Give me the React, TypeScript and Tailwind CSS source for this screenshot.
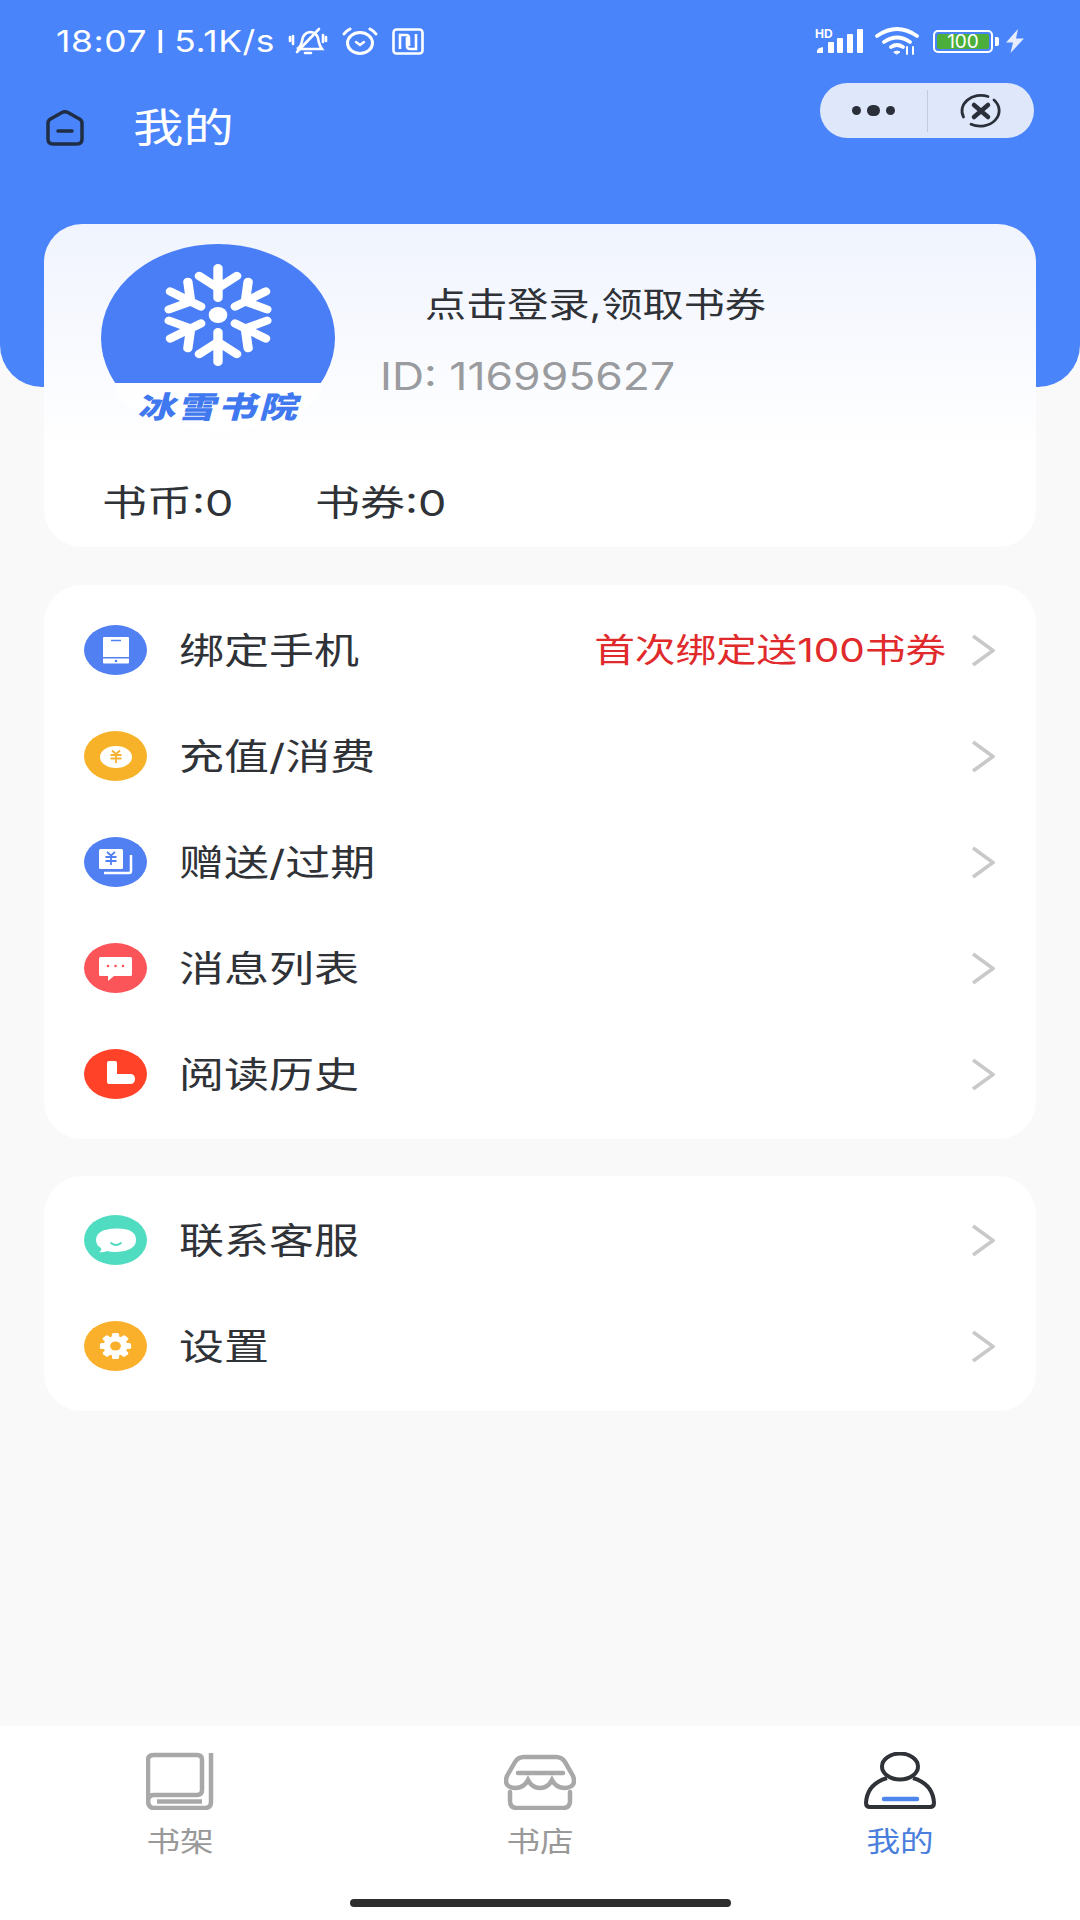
import type { ReactNode } from 'react'

const cjk = 'font-[Inter,"Noto_Sans_CJK_SC",sans-serif]'

function HomeIcon() {
  return (
    <svg width="40" height="36" viewBox="0 0 40 36" fill="none" stroke="#1f2d45" strokeWidth="3.5">
      <path d="M3 13q0-2.500 2.500-4L17 2.500q3-1.500 6 0L34.500 9q2.500 1.500 2.500 4v16q0 5-5 5H8q-5 0-5-5z" />
      <path d="M13 21h14" strokeLinecap="round" />
    </svg>
  )
}

function BellOff() {
  return (
    <svg width="40" height="28" viewBox="0 0 40 28" fill="none" stroke="#fff" strokeWidth="2.6" strokeLinecap="round">
      <path d="M9 22q4-2 5-8q1-8 8-9q6 0 8 6q1 7 4 11z" />
      <path d="M17 26h6M9 25L31 2" />
      <path d="M2 10v4M5 9v8M35 8v7M38 10v4" />
    </svg>
  )
}

function AlarmIcon() {
  return (
    <svg width="36" height="28" viewBox="0 0 36 28" fill="none" stroke="#fff" strokeWidth="3" strokeLinecap="round">
      <ellipse cx="18" cy="16" rx="12.500" ry="10.500" />
      <path d="M2 7q2-3 6-5M34 7q-2-3-6-5" />
      <path d="M14 15l4 3 4-3" strokeWidth="2.400" />
    </svg>
  )
}

function NfcIcon() {
  return (
    <svg width="32" height="27" viewBox="0 0 32 27" fill="none" stroke="#fff" strokeWidth="2.600">
      <rect x="1.500" y="1.500" width="29" height="24" rx="3" />
      <path d="M8 21V7h6q3 0 3 3v8M24 6v15h-6q-3 0-3-3V9" />
    </svg>
  )
}

function SignalIcon() {
  return (
    <svg width="48" height="26" viewBox="0 0 48 26" className="overflow-visible">
      <text x="0" y="10" fontSize="12" fontWeight="700" fill="#fff" fontFamily="Inter, sans-serif">HD</text>
      <g fill="#fff">
        <path d="M2 25v-2q0-3 6-4v6z" />
        <rect x="13" y="14" width="6" height="11" rx="1" />
        <rect x="22" y="10" width="6" height="15" rx="1" />
        <rect x="32" y="6" width="6" height="19" rx="1" />
        <rect x="42" y="1" width="6" height="24" rx="1" />
      </g>
    </svg>
  )
}

function WifiIcon() {
  return (
    <svg width="46" height="28" viewBox="0 0 46 28" fill="none" stroke="#fff" strokeWidth="3.800" strokeLinecap="round">
      <path d="M2 9q20-14 40 0M9 15q13-9 26 0M16 20q6-4 12 0" />
      <path d="M19 25q3-2 6 0l-3 2z" fill="#fff" strokeWidth="1" />
      <path d="M32 20v7M38 20v7" strokeWidth="2" />
    </svg>
  )
}

function BatteryIcon() {
  return (
    <div className="flex items-center gap-[2px]">
      <div className="flex h-[23px] w-[60px] items-center rounded-[5px] border-[2px] border-white p-[2px]">
        <div className="flex h-full w-full items-center justify-center rounded-[2px] bg-[#4caf3c] font-['Inter',sans-serif] text-[19px] leading-none text-white">
          100
        </div>
      </div>
      <div className="h-[9px] w-[4px] rounded-r-[2px] bg-white" />
    </div>
  )
}

function BoltIcon() {
  return (
    <svg width="18" height="24" viewBox="0 0 18 24" fill="#fff" opacity="0.85" className="-ml-[5px]">
      <path d="M12 0L0 13.500h7L4.500 24 18 9.500h-8z" />
    </svg>
  )
}

function CloseIcon() {
  return (
    <svg width="44" height="36" viewBox="0 0 44 36" fill="none" stroke="#2a2f3a" strokeLinecap="round">
      <path d="M4.500 24A19 15.500 0 0 1 29 3.500" strokeWidth="2.800" />
      <path d="M35 7A19 15.500 0 0 1 12 31.200" strokeWidth="2.800" />
      <path d="M15 12l14 12M29 12L15 24" strokeWidth="4.500" />
    </svg>
  )
}

function Snowflake() {
  const arm = 'M0-17V-47M0-27L-16-39M0-27L16-39'
  return (
    <g transform="translate(117 71) scale(1.17 1)" stroke="#fff" strokeLinecap="round" fill="none">
      <ellipse cx="0" cy="0" rx="8" ry="8" fill="#fff" stroke="none" />
      {[0, 60, 120, 180, 240, 300].map((a) => (
        <g key={a} transform={`rotate(${a})`}>
          <path d={arm} strokeWidth="8" />
        </g>
      ))}
    </g>
  )
}

function Logo() {
  return (
    <div className="flex w-[234px] flex-col items-center">
      <svg width="234" height="139" viewBox="0 0 234 139">
        <ellipse cx="117" cy="94" rx="117" ry="94" fill="#4a7ef7" />
        <Snowflake />
      </svg>
      <div className="flex h-[47px] w-[207px] justify-center bg-white/70 pt-[9px] [border-radius:0_0_50%_50%/0_0_100%_100%]">
        <p className="ml-[3px] scale-x-[1.27] -skew-x-12 text-[30px] leading-[30px] font-black tracking-[2px] whitespace-nowrap text-[#3f78ef]">
          冰雪书院
        </p>
      </div>
    </div>
  )
}

function TabletGlyph() {
  return (
    <svg width="63" height="50" viewBox="0 0 63 50">
      <ellipse cx="31.500" cy="25" rx="31.500" ry="25" fill="#5180f3" />
      <path d="M19 13q0-1 1-1h24q1 0 1 1v19H19zM19 33.500h26v4q0 1-1 1H20q-1 0-1-1z" fill="#fff" />
      <path d="M27 15.500h10" stroke="#5180f3" strokeWidth="1.500" />
      <circle cx="32" cy="36" r="1.300" fill="#5180f3" />
    </svg>
  )
}

function CoinGlyph() {
  return (
    <svg width="63" height="50" viewBox="0 0 63 50">
      <ellipse cx="31.500" cy="25" rx="31.500" ry="25" fill="#f8b22a" />
      <ellipse cx="32" cy="26" rx="16" ry="11" fill="#fff" />
      <path d="M28 19.500l4 3.500 4-3.500M26.500 24h11M26.500 27.500h11M32 23v9" stroke="#f5b132" strokeWidth="1.800" fill="none" />
    </svg>
  )
}

function GiftGlyph() {
  return (
    <svg width="63" height="50" viewBox="0 0 63 50">
      <ellipse cx="31.500" cy="25" rx="31.500" ry="25" fill="#5180f3" />
      <path d="M20 36h25q2 0 2-2V18" fill="none" stroke="#fff" strokeWidth="2.500" />
      <rect x="15" y="12" width="24" height="20" rx="1.500" fill="#fff" />
      <path d="M23 15l4 3.500 4-3.500M21.500 20h11M21.500 24h11M27 19v9" stroke="#5180f3" strokeWidth="1.800" fill="none" />
    </svg>
  )
}

function MessageGlyph() {
  return (
    <svg width="63" height="50" viewBox="0 0 63 50">
      <ellipse cx="31.500" cy="25" rx="31.500" ry="25" fill="#fb5459" />
      <path d="M15 15.500q0-1.500 1.500-1.500h30q1.500 0 1.500 1.500v16q0 1.500-1.500 1.500H30l-6 5v-5h-7.500q-1.500 0-1.500-1.500z" fill="#fff" />
      <g fill="#fb5459">
        <circle cx="24" cy="23" r="1.300" />
        <circle cx="31.500" cy="23" r="1.300" />
        <circle cx="39" cy="23" r="1.300" />
      </g>
    </svg>
  )
}

function HistoryGlyph() {
  return (
    <svg width="63" height="50" viewBox="0 0 63 50">
      <ellipse cx="31.500" cy="25" rx="31.500" ry="25" fill="#ff4228" />
      <path d="M23 14q0-2 2-2h6q2 0 2 2v11h13q5 0 5 5t-5 5H25q-2 0-2-2z" fill="#fff" />
    </svg>
  )
}

function ServiceGlyph() {
  return (
    <svg width="63" height="50" viewBox="0 0 63 50">
      <ellipse cx="31.500" cy="25" rx="31.500" ry="25" fill="#4fdcc1" />
      <path d="M12 25q0-11 20-11.500Q52 13 52 25q0 11-20 12q-6 0-9-1-4 2-8 1 3-1 2-4-5-3-5-8z" fill="#fff" />
      <path d="M27 28q5 4 10 0" stroke="#4fdcc1" strokeWidth="1.800" fill="none" strokeLinecap="round" />
    </svg>
  )
}

function SettingsGlyph() {
  return (
    <svg width="63" height="50" viewBox="0 0 63 50">
      <ellipse cx="31.500" cy="25" rx="31.500" ry="25" fill="#fbb02c" />
      <g transform="translate(31.500 25) scale(1.200 1)">
        {[0, 45, 90, 135].map((a) => (
          <rect key={a} x="-3" y="-13" width="6" height="26" rx="1.500" fill="#fff" transform={`rotate(${a})`} />
        ))}
        <circle r="10" fill="#fff" />
        <circle r="4.500" fill="#fbb02c" />
      </g>
    </svg>
  )
}

function Chevron() {
  return (
    <svg width="24" height="33" viewBox="0 0 24 33" fill="none" stroke="#c9c9c9" strokeWidth="3.600" className="shrink-0">
      <path d="M2 2l20 14.500L2 31" />
    </svg>
  )
}

function Row({ icon, label, note }: { icon: ReactNode; label: string; note?: string }) {
  return (
    <div className="flex h-[106px] items-center pr-[41px] pl-[40px]">
      {icon}
      <span className="ml-[32px] origin-left scale-x-[1.25] pt-[1px] text-[36px] leading-none text-[#2f3237]">{label}</span>
      {note && (
        <span className="mr-[25px] ml-auto origin-right scale-x-[1.23] pt-[1px] text-[33px] leading-none text-[#e02a2c]">{note}</span>
      )}
      <span className={note ? '' : 'ml-auto'}>
        <Chevron />
      </span>
    </div>
  )
}

function BookTab() {
  return (
    <svg width="68" height="58" viewBox="0 0 68 58" fill="none" stroke="#a8a8a8" strokeWidth="4.500">
      <path d="M8 3h43q5 0 5 5v30q0 5-5 5H8q-6 0-6 6V8q0-5 6-5z" />
      <path d="M65 1v49q0 6-6 6H8q-6 0-6-8" />
      <path d="M11 49.500h45" />
    </svg>
  )
}

function StoreTab() {
  return (
    <svg width="72" height="56" viewBox="0 0 72 56" fill="none" stroke="#a8a8a8" strokeWidth="4.500" strokeLinecap="round">
      <path d="M20 3H52Q58 3 61 8L69 22Q73 33 61 34Q52 34 48 26Q44 34 36 34Q28 34 24 26Q20 34 11 34Q-1 33 3 22L11 8Q14 3 20 3z" />
      <path d="M14 19h45" />
      <path d="M6 38v9q0 7 7 7h46q7 0 7-7v-9" />
    </svg>
  )
}

function MeTab() {
  return (
    <svg width="74" height="58" viewBox="0 0 74 58" fill="none" strokeWidth="4">
      <ellipse cx="37" cy="14.500" rx="18" ry="13" stroke="#2f3237" />
      <path d="M24 26Q4 32 3 51q0 4 4 4h60q4 0 4-4-1-19-21-25" stroke="#2f3237" />
      <path d="M21 47h33" stroke="#4f86ee" strokeWidth="4.500" strokeLinecap="round" />
    </svg>
  )
}

function Tab({ icon, label, active }: { icon: ReactNode; label: string; active?: boolean }) {
  return (
    <div className="flex flex-col items-center">
      <div className="flex h-[58px] items-end">{icon}</div>
      <span className={`mt-[18px] scale-x-[1.2] text-[28px] leading-[28px] ${active ? 'text-[#4a7fdc]' : 'text-[#999999]'}`}>{label}</span>
    </div>
  )
}

export default function App() {
  return (
    <div className={`${cjk} flex h-[1920px] w-[1080px] flex-col overflow-hidden bg-[#f9f9f9]`}>
      {/* Blue header, the profile card overlaps its bottom */}
      <header className="h-[387px] shrink-0 rounded-b-[42px] bg-[#4a84fb] pt-[27px]">
        <div className="flex h-[28px] items-center justify-between pr-[56px] pl-[56px]">
          <div className="flex items-center text-white">
            <span className="flex w-[232px] origin-left scale-x-[1.18] items-center text-[30px] leading-none tracking-[0.5px] whitespace-nowrap">
              18:07<span className="mx-[10px] h-[23px] w-[3px] bg-white" />5.1K/s
            </span>
            <span className="flex items-center gap-[14px]">
              <BellOff />
              <AlarmIcon />
              <NfcIcon />
            </span>
          </div>
          <div className="flex items-center gap-[12px]">
            <SignalIcon />
            <WifiIcon />
            <BatteryIcon />
            <BoltIcon />
          </div>
        </div>
        <div className="flex items-start justify-between pt-[28px] pr-[46px] pl-[45px]">
          <div className="mt-[25px] flex h-[40px] items-center">
            <HomeIcon />
            <span className="ml-[48px] origin-left scale-x-[1.26] text-[40px] leading-none text-white">我的</span>
          </div>
          <div className="flex h-[55px] w-[214px] items-center rounded-full bg-[#dfe8fb]">
            <div className="flex w-[107px] items-center justify-center gap-[6px]">
              <span className="size-[9px] rounded-full bg-[#2a2f3a]" />
              <span className="h-[11px] w-[13px] rounded-full bg-[#2a2f3a]" />
              <span className="size-[9px] rounded-full bg-[#2a2f3a]" />
            </div>
            <div className="h-[42px] w-px bg-[#c4ccdc]" />
            <div className="flex flex-1 items-center justify-center">
              <CloseIcon />
            </div>
          </div>
        </div>
      </header>

      {/* Profile card */}
      <section className="relative mx-[44px] -mt-[163px] h-[323px] shrink-0 rounded-[38px] bg-linear-to-b from-[#f0f4fe] from-0% to-white to-70% pt-[20px]">
        <div className="flex pl-[57px]">
          <Logo />
          <div className="ml-[45px] flex flex-col">
            <span className="mt-[44px] ml-[45px] origin-left scale-x-[1.21] text-[34px] leading-none whitespace-nowrap text-[#2f3237]">点击登录,领取书券</span>
            <span className="mt-[35px] origin-left scale-x-[1.17] text-[38px] leading-none whitespace-nowrap text-[#999b9e]">ID: 116995627</span>
          </div>
        </div>
        <div className="mt-[55px] flex gap-[85px] pl-[58px] text-[36px] leading-none text-[#2f3237]">
          <span className="w-[128px] origin-left scale-x-[1.25] whitespace-nowrap">书币:0</span>
          <span className="w-[128px] origin-left scale-x-[1.25] whitespace-nowrap">书券:0</span>
        </div>
      </section>

      {/* Menu groups */}
      <section className="mx-[44px] mt-[38px] shrink-0 rounded-[38px] bg-white py-[12px]">
        <Row icon={<TabletGlyph />} label="绑定手机" note="首次绑定送100书券" />
        <Row icon={<CoinGlyph />} label="充值/消费" />
        <Row icon={<GiftGlyph />} label="赠送/过期" />
        <Row icon={<MessageGlyph />} label="消息列表" />
        <Row icon={<HistoryGlyph />} label="阅读历史" />
      </section>
      <section className="mx-[44px] mt-[37px] shrink-0 rounded-[38px] bg-white pt-[11px] pb-[12px]">
        <Row icon={<ServiceGlyph />} label="联系客服" />
        <Row icon={<SettingsGlyph />} label="设置" />
      </section>

      {/* Bottom tabs */}
      <nav className="mt-auto flex h-[194px] shrink-0 flex-col bg-white">
        <div className="grid grid-cols-3 pt-[26px]">
          <Tab icon={<BookTab />} label="书架" />
          <Tab icon={<StoreTab />} label="书店" />
          <Tab icon={<MeTab />} label="我的" active />
        </div>
        <div className="mx-auto mt-auto mb-[13px] h-[8px] w-[381px] rounded-full bg-[#2d2d2d]" />
      </nav>
    </div>
  )
}
